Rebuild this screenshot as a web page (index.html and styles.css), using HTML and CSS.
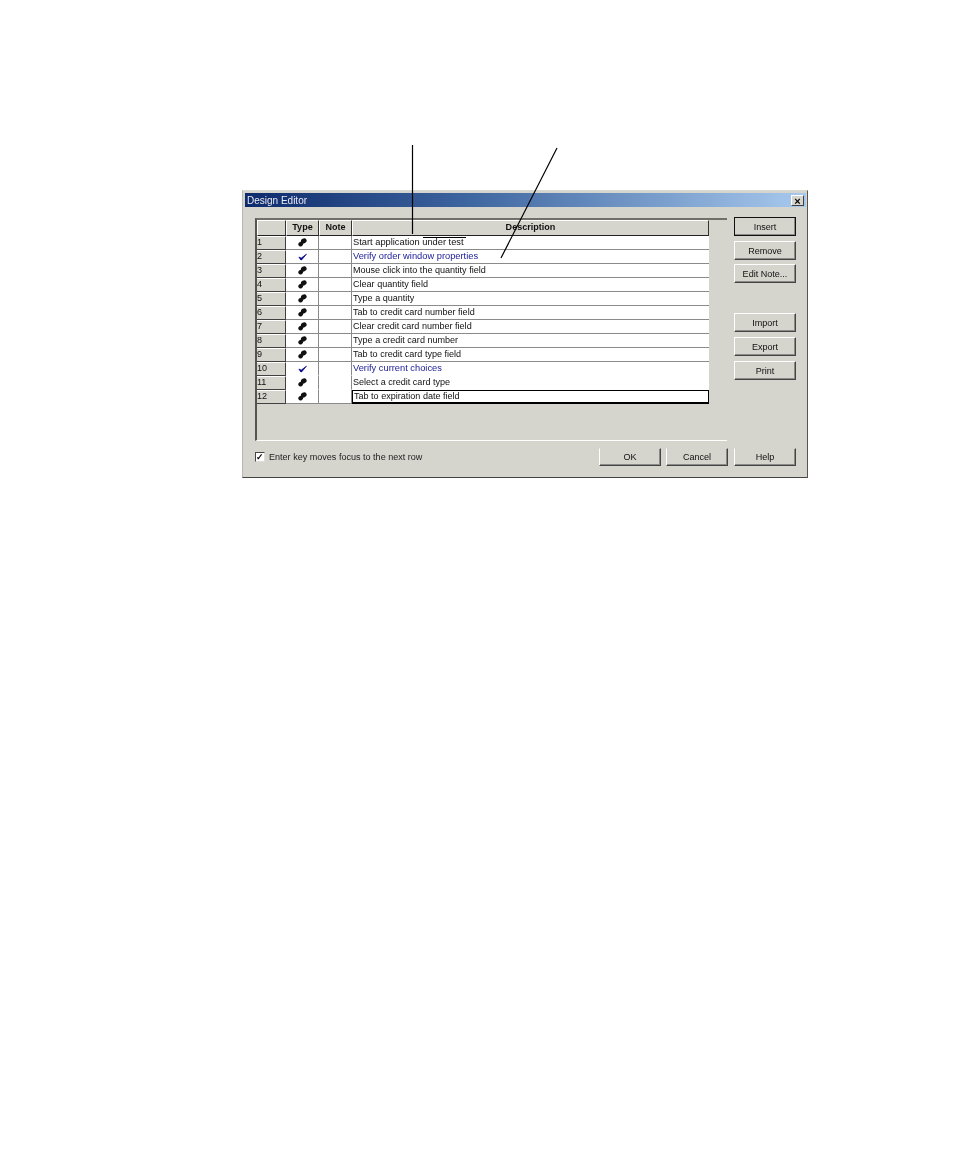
FILE: index.html
```html
<!DOCTYPE html>
<html lang="en">
<head>
<meta charset="utf-8">
<title>Design Editor</title>
<link rel="stylesheet" href="styles.css">
</head>
<body>
<svg width="0" height="0" class="defs">
  <defs>
    <symbol id="action" viewBox="0 0 10 10">
      <ellipse cx="6.4" cy="3.3" rx="3.3" ry="2.7" transform="rotate(-30 6.4 3.3)"/>
      <ellipse cx="3" cy="6.8" rx="2.7" ry="2.4" transform="rotate(-35 3 6.8)"/>
    </symbol>
    <symbol id="verify" viewBox="0 0 10 10">
      <path d="M1 5.6 L3.6 6.8 L9.4 2.4 L4 8.8 L3 8.8 Z" stroke-width="0.8" stroke="currentColor" stroke-linejoin="round"/>
    </symbol>
  </defs>
</svg>
<main class="dialog">
  <header class="titlebar">
    <span class="title">Design Editor</span>
    <span class="close">×</span>
  </header>
  <div class="top">
    <div class="frame">
      <div class="grid">
        <div class="row head">
          <div class="hc idx"></div><div class="hc type">Type</div><div class="hc note">Note</div><div class="hc desc">Description</div>
        </div>
        <div class="row wide"><div class="idx">1</div><div class="type"><svg class="ico"><use href="#action"/></svg></div><div class="note"></div><div class="desc">Start application under test</div></div>
        <div class="row vf"><div class="idx">2</div><div class="type"><svg class="ico"><use href="#verify"/></svg></div><div class="note"></div><div class="desc">Verify order window properties</div></div>
        <div class="row"><div class="idx">3</div><div class="type"><svg class="ico"><use href="#action"/></svg></div><div class="note"></div><div class="desc">Mouse click into the quantity field</div></div>
        <div class="row"><div class="idx">4</div><div class="type"><svg class="ico"><use href="#action"/></svg></div><div class="note"></div><div class="desc">Clear quantity field</div></div>
        <div class="row"><div class="idx">5</div><div class="type"><svg class="ico"><use href="#action"/></svg></div><div class="note"></div><div class="desc">Type a quantity</div></div>
        <div class="row"><div class="idx">6</div><div class="type"><svg class="ico"><use href="#action"/></svg></div><div class="note"></div><div class="desc">Tab to credit card number field</div></div>
        <div class="row"><div class="idx">7</div><div class="type"><svg class="ico"><use href="#action"/></svg></div><div class="note"></div><div class="desc">Clear credit card number field</div></div>
        <div class="row"><div class="idx">8</div><div class="type"><svg class="ico"><use href="#action"/></svg></div><div class="note"></div><div class="desc">Type a credit card number</div></div>
        <div class="row"><div class="idx">9</div><div class="type"><svg class="ico"><use href="#action"/></svg></div><div class="note"></div><div class="desc">Tab to credit card type field</div></div>
        <div class="row vf open"><div class="idx">10</div><div class="type"><svg class="ico"><use href="#verify"/></svg></div><div class="note"></div><div class="desc">Verify current choices</div></div>
        <div class="row open"><div class="idx">11</div><div class="type"><svg class="ico"><use href="#action"/></svg></div><div class="note"></div><div class="desc">Select a credit card type</div></div>
        <div class="row focus"><div class="idx">12</div><div class="type"><svg class="ico"><use href="#action"/></svg></div><div class="note"></div><div class="desc">Tab to expiration date field</div></div>
      </div>
    </div>
    <div class="side">
      <button class="btn default">Insert</button>
      <button class="btn">Remove</button>
      <button class="btn tight">Edit Note...</button>
      <button class="btn group">Import</button>
      <button class="btn">Export</button>
      <button class="btn">Print</button>
    </div>
  </div>
  <div class="bottom">
    <label class="check"><span class="box">✓</span>Enter key moves focus to the next row</label>
    <div class="actions">
      <button class="btn flat">OK</button>
      <button class="btn flat">Cancel</button>
      <button class="btn flat help">Help</button>
    </div>
  </div>
</main>
<svg class="callouts" width="966" height="1161">
  <path d="M412.5 145 V234 M557 148 L501 258 M423 237.5 H466"/>
</svg>
</body>
</html>
```

FILE: styles.css
```css
* { box-sizing: border-box; }
html, body { margin: 0; background: #fff; }
body {
  position: relative;
  width: 966px;
  height: 1161px;
  padding: 190px 0 0 242px;
  font-family: "Liberation Sans", Arial, sans-serif;
  font-size: 9.05px;
  color: #111;
}
.defs { position: absolute; }
.dialog {
  width: 566px;
  height: 288px;
  background: #d5d4cd;
  border: 1px solid;
  border-color: #d8d8d4 #555 #444 #b8b8b4;
  padding: 2px 1px 0 2px;
  filter: blur(0.25px);
}
.titlebar {
  height: 14px;
  display: flex;
  align-items: center;
  justify-content: space-between;
  padding: 0 2px 0 2px;
  background: linear-gradient(90deg, #0d2a6c, #3e66a0 40%, #a8c9ee);
  color: #e8e8f0;
  font-size: 10px;
}
.close {
  width: 13px;
  height: 11px;
  background: #d5d4cd;
  color: #000;
  font-size: 11px;
  font-weight: 700;
  line-height: 10px;
  text-align: center;
  border: 1px solid;
  border-color: #fff #404040 #404040 #fff;
}
.top {
  display: flex;
  gap: 7px;
  height: 234px;
  padding: 11px 0 0 10px;
}
.frame {
  width: 472px;
  height: 223px;
  border-top: 2px solid #706f6a;
  border-left: 2px solid #55544f;
  border-bottom: 1px solid #fff;
}
.grid { width: 452px; }
.row {
  display: grid;
  grid-template-columns: 29px 33px 33px 357px;
  height: 14px;
  line-height: 13px;
  background: #fff;
}
.row > div { border-bottom: 1px solid #8a8a8a; white-space: nowrap; }
.row > .type, .row > .note {
  border-right: 1px solid #8a8a8a;
  display: flex;
  justify-content: center;
  align-items: center;
}
.row > .idx {
  background: #d5d4cd;
  border-right: 1px solid #404040;
  border-bottom-color: #404040;
  border-top: 1px solid #fff;
  line-height: 11px;
}
.row > .desc { padding-left: 1px; }
.wide .desc { font-size: 9.3px; }
.head { height: 16px; background: #d5d4cd; }
.row > .hc {
  background: #d5d4cd;
  border: 1px solid;
  border-color: #fff #333 #222 #fff;
  font-weight: 700;
  text-align: center;
  padding: 0;
  display: block;
  line-height: 13px;
}
.row.head .desc { text-align: center; }
.vf .desc { color: #1a1a96; font-size: 9.3px; }
.vf .ico { color: #0a0a8a; }
.open > .type, .open > .note, .open > .desc { border-bottom-color: #fff; }
.focus > .desc { border: 1px solid #000; border-bottom-width: 2px; line-height: 11px; }
.ico { width: 9px; height: 9px; fill: currentColor; color: #111; }
.side {
  display: flex;
  flex-direction: column;
  gap: 5px;
  margin-top: -1px;
}
.btn {
  width: 62px;
  height: 19px;
  padding: 0;
  background: #d5d4cd;
  border: 1px solid;
  border-color: #fff #444 #444 #fff;
  box-shadow: inset -1px -1px 0 #8a8a86;
  font: inherit;
  color: #111;
}
.btn.default { border-color: #111; }
.btn.tight { margin-top: -1px; }
.btn.group { margin-top: 25px; }
.bottom {
  display: flex;
  align-items: flex-start;
  justify-content: space-between;
  padding: 7px 10px 0 10px;
}
.check { display: flex; align-items: center; gap: 4px; height: 18px; color: #222; }
.box {
  width: 10px;
  height: 10px;
  background: #fff;
  border: 1px solid;
  border-color: #444 #ddd #ddd #444;
  font-size: 9px;
  font-weight: 700;
  line-height: 8px;
  text-align: center;
  color: #000;
}
.actions { display: flex; gap: 5px; }
.btn.flat { height: 18px; border-top-color: #d5d4cd; }
.btn.help { margin-left: 1px; }
.callouts { position: absolute; left: 0; top: 0; pointer-events: none; }
.callouts path { fill: none; stroke: #000; stroke-width: 1.2; }
```
